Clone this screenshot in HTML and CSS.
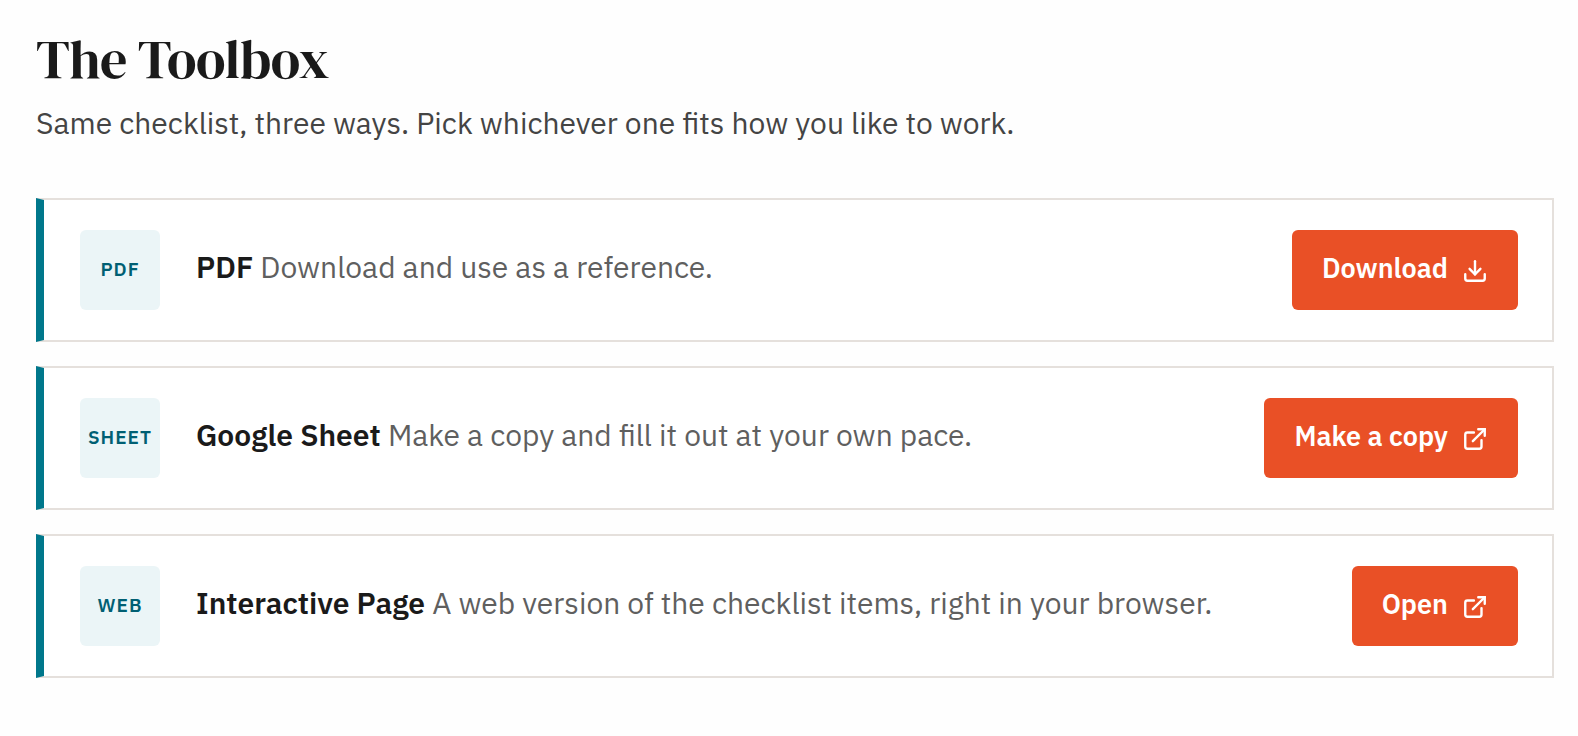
FILE: index.html
```
<!DOCTYPE html>
<html lang="en">
<head>
    <meta charset="UTF-8">
    <meta name="viewport" content="width=device-width, initial-scale=1">
    <title>The Toolbox</title>
    <link rel="stylesheet" href="styles.css">
</head>
<body>
    <main class="toolbox">
        <h1>The Toolbox</h1>
        <p class="intro">Same checklist, three ways. Pick whichever one fits how you like to work.</p>

        <div class="cards">
            <div class="card">
                <span class="badge">PDF</span>
                <p class="text"><strong>PDF</strong> Download and use as a reference.</p>
                <a class="button" href="#">
                    Download
                    <svg class="icon" viewBox="0 0 24 24" aria-hidden="true">
                        <path d="M21 15v4a2 2 0 0 1-2 2H5a2 2 0 0 1-2-2v-4"/>
                        <path d="M7 10l5 5 5-5"/>
                        <path d="M12 15V3"/>
                    </svg>
                </a>
            </div>

            <div class="card">
                <span class="badge">SHEET</span>
                <p class="text"><strong>Google Sheet</strong> Make a copy and fill it out at your own pace.</p>
                <a class="button" href="#">
                    Make a copy
                    <svg class="icon" viewBox="0 0 24 24" aria-hidden="true">
                        <path d="M18 13v6a2 2 0 0 1-2 2H5a2 2 0 0 1-2-2V8a2 2 0 0 1 2-2h6"/>
                        <path d="M15 3h6v6"/>
                        <path d="M10 14L21 3"/>
                    </svg>
                </a>
            </div>

            <div class="card">
                <span class="badge">WEB</span>
                <p class="text"><strong>Interactive Page</strong> A web version of the checklist items, right in your browser.</p>
                <a class="button" href="#">
                    Open
                    <svg class="icon" viewBox="0 0 24 24" aria-hidden="true">
                        <path d="M18 13v6a2 2 0 0 1-2 2H5a2 2 0 0 1-2-2V8a2 2 0 0 1 2-2h6"/>
                        <path d="M15 3h6v6"/>
                        <path d="M10 14L21 3"/>
                    </svg>
                </a>
            </div>
        </div>
    </main>
</body>
</html>
```
FILE: styles.css
```
body {
    font-family: "IBM Plex Sans", Roboto, sans-serif;
    margin: 0;
    background-color: #fefefe;
    color: #1a1a1a;
}

.toolbox {
    padding: 28px 24px 56px 36px;
}

h1 {
    font-family: "DM Serif Display", "Liberation Serif", serif;
    font-size: 54px;
    font-weight: 400;
    line-height: 62px;
    letter-spacing: -0.01em;
    margin: 0;
}

.intro {
    font-size: 30px;
    line-height: 48px;
    margin: 9px 0 51px;
    color: #444;
}

.cards {
    display: flex;
    flex-direction: column;
    gap: 24px;
}

.card {
    display: flex;
    align-items: center;
    gap: 36px;
    padding: 30px 34px 30px 36px;
    border: 2px solid #e5e0dc;
    border-left: 8px solid #00778b;
    background-color: #fff;
}

.badge {
    display: flex;
    flex: none;
    align-items: center;
    justify-content: center;
    box-sizing: border-box;
    width: 80px;
    height: 80px;
    padding-bottom: 2px;
    border-radius: 6px;
    background-color: #ebf5f7;
    color: #005f73;
    font-size: 19px;
    font-weight: 600;
    letter-spacing: 1px;
}

.text {
    flex: 1;
    margin: 0;
    padding-bottom: 6px;
    font-size: 30px;
    line-height: 48px;
    color: #5f5f5f;
}

.text strong {
    font-weight: 600;
    color: #1a1a1a;
}

.button {
    display: flex;
    flex: none;
    align-items: center;
    gap: 14px;
    box-sizing: border-box;
    height: 80px;
    padding: 0 30px 6px;
    border-radius: 6px;
    background-color: #e95026;
    color: #fff;
    font-size: 27px;
    font-weight: 600;
    text-decoration: none;
}

.button:hover {
    background-color: #d14520;
}

.icon {
    width: 26px;
    height: 26px;
    margin-top: 8px;
    fill: none;
    stroke: currentColor;
    stroke-width: 2.2;
    stroke-linecap: round;
    stroke-linejoin: miter;
}
```
